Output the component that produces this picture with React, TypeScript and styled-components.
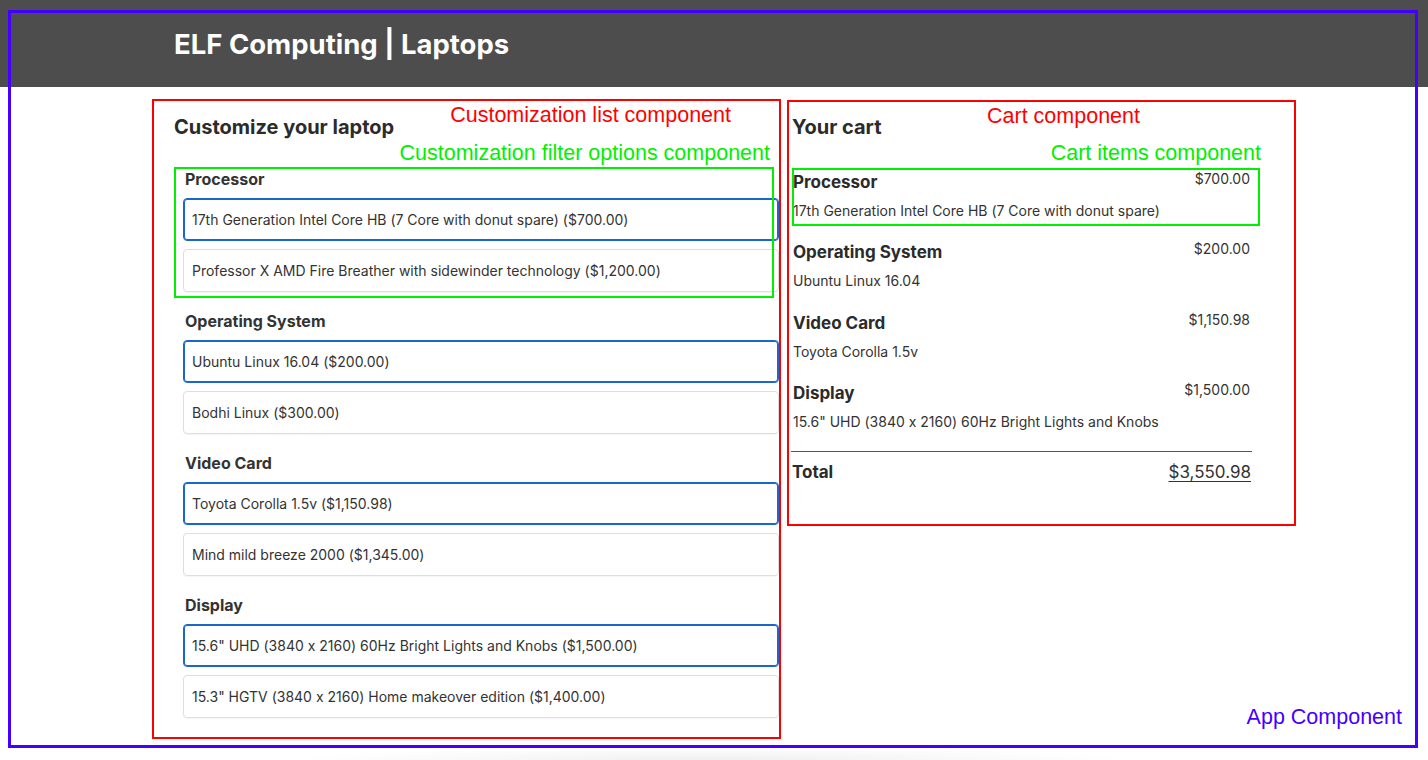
import React, { useState } from "react";
import styled, { createGlobalStyle } from "styled-components";

const GlobalStyle = createGlobalStyle`
  html, body { margin: 0; padding: 0; background: #fff; }
  body {
    font-family: Inter, "Noto Sans", sans-serif;
    font-feature-settings: "calt" 0;
    color: #333;
  }
  * { box-sizing: border-box; }
`;

type Option = { name: string; cost: number };
const FEATURES: Record<string, Option[]> = {
  Processor: [
    { name: "17th Generation Intel Core HB (7 Core with donut spare)", cost: 700 },
    { name: "Professor X AMD Fire Breather with sidewinder technology", cost: 1200 },
  ],
  "Operating System": [
    { name: "Ubuntu Linux 16.04", cost: 200 },
    { name: "Bodhi Linux", cost: 300 },
  ],
  "Video Card": [
    { name: "Toyota Corolla 1.5v", cost: 1150.98 },
    { name: "Mind mild breeze 2000", cost: 1345 },
  ],
  Display: [
    { name: '15.6" UHD (3840 x 2160) 60Hz Bright Lights and Knobs', cost: 1500 },
    { name: '15.3" HGTV (3840 x 2160) Home makeover edition', cost: 1400 },
  ],
};

const USD = new Intl.NumberFormat("en-US", { style: "currency", currency: "USD" });

const Page = styled.div`
  position: relative;
  min-height: 760px;
  overflow: hidden;
  background: radial-gradient(ellipse 420px 14px at 50% 100%, rgba(0, 0, 0, 0.06), rgba(0, 0, 0, 0) 100%);
`;

const Header = styled.header`
  height: 87px;
  background: #4d4d4d;
`;

const Container = styled.div`
  width: 1080px;
  margin: 0 auto;
`;

const HeaderInner = styled(Container)`
  height: 100%;
  display: flex;
  align-items: center;
`;

const Title = styled.h1`
  margin: 0;
  color: #fff;
  font-size: 27.5px;
  font-weight: 700;
  line-height: 1;
  padding-top: 2px;
`;

const Main = styled(Container)`
  display: grid;
  grid-template-columns: 605px 460px;
  column-gap: 13px;
  align-items: start;
  padding-top: 28px;
`;

const Section = styled.section`
  position: relative;
`;

const SectionTitle = styled.h2`
  margin: 0 0 30px;
  font-size: 20px;
  line-height: 24px;
  font-weight: 700;
  color: #2b2b2b;
`;

const Fieldset = styled.fieldset`
  position: relative;
  margin: 0 0 19px;
  padding: 0 0 0 9px;
  border: none;
  min-width: 0;
`;

const Legend = styled.h3`
  margin: 0 0 9px 2px;
  font-size: 16px;
  line-height: 20px;
  font-weight: 700;
  color: #333;
`;

const OptionList = styled.div`
  display: flex;
  flex-direction: column;
  gap: 8px;
`;

const OptionBox = styled.label<{ $selected: boolean }>`
  display: flex;
  align-items: center;
  height: 43px;
  padding: 0 8px;
  border-radius: 4px;
  border: 1px solid ${(p) => (p.$selected ? "#1a66cc" : "#dedede")};
  box-shadow: ${(p) =>
    p.$selected ? "inset 0 0 0 1px #1a66cc" : "0 1px 1px rgba(0,0,0,0.04)"};
  font-size: 14px;
  color: #333;
  cursor: pointer;
  input { display: none; }
`;

const CartList = styled.div`
  display: flex;
  flex-direction: column;
  gap: 19.5px;
  padding-top: 0.5px;
  margin-bottom: 19px;
`;

const CartItem = styled.div`
  position: relative;
  display: grid;
  grid-template-columns: 1fr auto;
  row-gap: 7px;
  padding: 0 2px 0 1px;
`;

const ItemName = styled.div`
  font-size: 17px;
  line-height: 24px;
  font-weight: 700;
  color: #2b2b2b;
`;

const ItemPrice = styled.div`
  font-size: 14px;
  line-height: 18px;
  color: #333;
`;

const ItemDesc = styled.div`
  grid-column: 1 / -1;
  font-size: 14px;
  line-height: 20px;
  color: #333;
`;

const Divider = styled.hr`
  margin: 0 0 8px -1px;
  border: none;
  border-top: 1px solid #555;
`;

const TotalRow = styled.div`
  display: flex;
  justify-content: space-between;
  align-items: center;
  padding-right: 1px;
`;

const TotalLabel = styled.div`
  font-size: 17px;
  line-height: 24px;
  font-weight: 700;
  color: #2b2b2b;
`;

const TotalAmount = styled.div`
  font-size: 17px;
  line-height: 24px;
  color: #333;
  text-decoration: underline;
  text-underline-offset: 3px;
  text-decoration-thickness: 1px;
`;

/* annotation overlays: a frame drawn over a component, with its caption */
const Frame = styled.div<{ $color: string; $inset: string; $w: number; $end?: boolean }>`
  position: absolute;
  inset: ${(p) => p.$inset};
  border: ${(p) => p.$w}px solid ${(p) => p.$color};
  display: flex;
  flex-direction: column;
  align-items: flex-end;
  justify-content: ${(p) => (p.$end ? "flex-end" : "flex-start")};
  pointer-events: none;
`;

const Caption = styled.span<{ $color: string; $margin: string }>`
  margin: ${(p) => p.$margin};
  font-family: "Liberation Sans", Arial, sans-serif;
  font-size: 21.5px;
  line-height: 24px;
  color: ${(p) => p.$color};
  white-space: nowrap;
`;

const RED = "#ff0000";
const GREEN = "#00f000";
const BLUE = "#4400ff";

type AnnotationProps = {
  color: string;
  inset: string;
  label: string;
  margin: string;
  width?: number;
  end?: boolean;
};

function Annotation({ color, inset, label, margin, width = 2, end }: AnnotationProps) {
  return (
    <Frame $color={color} $inset={inset} $w={width} $end={end}>
      <Caption $color={color} $margin={margin}>
        {label}
      </Caption>
    </Frame>
  );
}

export default function App() {
  const [selected, setSelected] = useState<Record<string, number>>({
    Processor: 0,
    "Operating System": 0,
    "Video Card": 0,
    Display: 0,
  });

  const keys = Object.keys(FEATURES);
  const total = keys.reduce((s, k) => s + FEATURES[k][selected[k]].cost, 0);

  return (
    <Page>
      <GlobalStyle />
      <Header>
        <HeaderInner>
          <Title>ELF Computing | Laptops</Title>
        </HeaderInner>
      </Header>
      <Main>
        <Section>
          <SectionTitle>Customize your laptop</SectionTitle>
          {keys.map((k, i) => (
            <Fieldset key={k}>
              <Legend>{k}</Legend>
              <OptionList>
                {FEATURES[k].map((o, j) => (
                  <OptionBox key={o.name} $selected={selected[k] === j}>
                    <input
                      type="radio"
                      name={k}
                      checked={selected[k] === j}
                      onChange={() => setSelected({ ...selected, [k]: j })}
                    />
                    {o.name} ({USD.format(o.cost)})
                  </OptionBox>
                ))}
              </OptionList>
              {i === 0 && (
                <Annotation
                  color={GREEN}
                  inset="-2px 5px -6px 0"
                  label="Customization filter options component"
                  margin="-28px 2px 0 0"
                />
              )}
            </Fieldset>
          ))}
          <Annotation
            color={RED}
            inset="-16px -2px -2px -22px"
            label="Customization list component"
            margin="2px 48px 0 0"
          />
        </Section>

        <Section>
          <SectionTitle>Your cart</SectionTitle>
          <CartList>
            {keys.map((k, i) => (
              <CartItem key={k}>
                <ItemName>{k}</ItemName>
                <ItemPrice>{USD.format(FEATURES[k][selected[k]].cost)}</ItemPrice>
                <ItemDesc>{FEATURES[k][selected[k]].name}</ItemDesc>
                {i === 0 && (
                  <Annotation
                    color={GREEN}
                    inset="-2px -8px -5px 0"
                    label="Cart items component"
                    margin="-29px -3px 0 0"
                  />
                )}
              </CartItem>
            ))}
          </CartList>
          <Divider />
          <TotalRow>
            <TotalLabel>Total</TotalLabel>
            <TotalAmount>{USD.format(total)}</TotalAmount>
          </TotalRow>
          <Annotation
            color={RED}
            inset="-15px -44px -42px -5px"
            label="Cart component"
            margin="2px 154px 0 0"
          />
        </Section>
      </Main>
      <Annotation
        color={BLUE}
        inset="10px 10px 12px 8px"
        width={3}
        end
        label="App Component"
        margin="0 13px 16px 0"
      />
    </Page>
  );
}
